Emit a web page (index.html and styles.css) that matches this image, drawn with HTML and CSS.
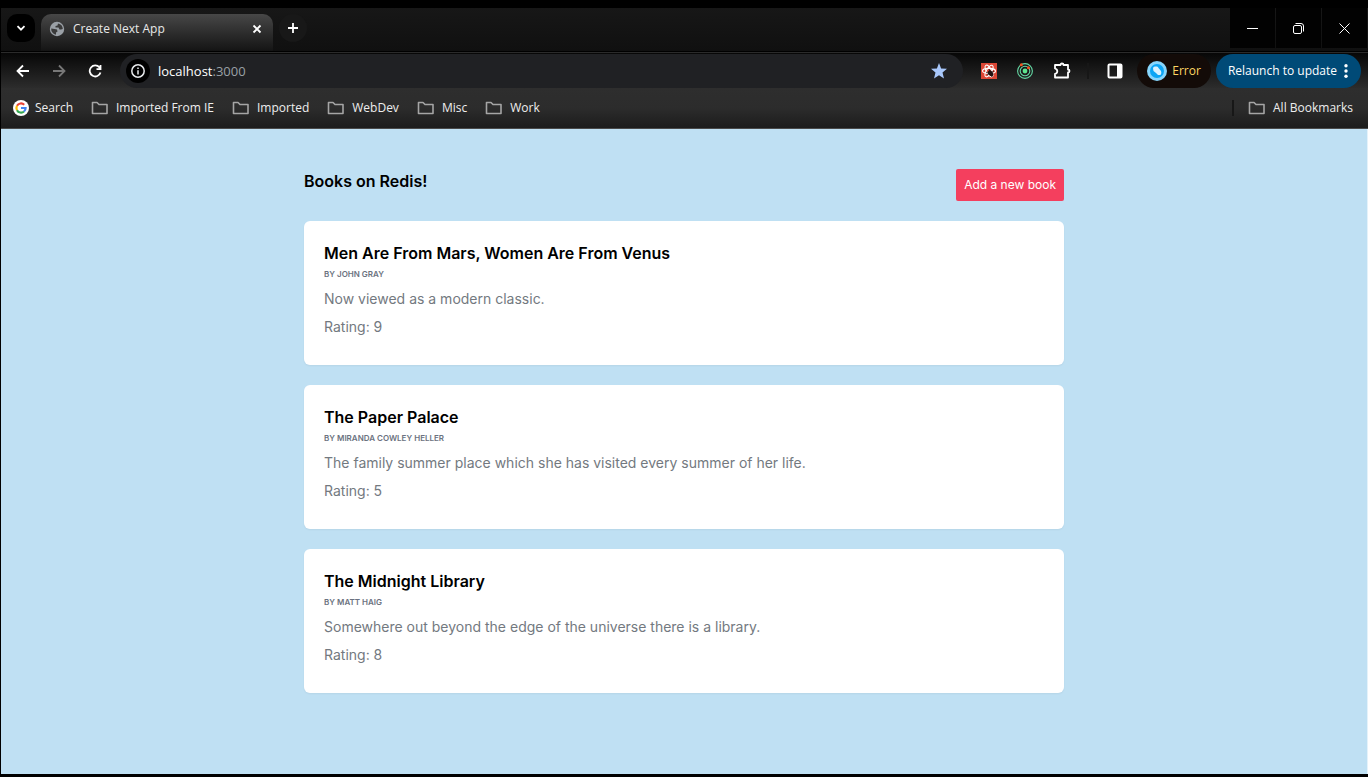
FILE: index.html
```html
<!DOCTYPE html>
<html lang="en">
<head>
<meta charset="utf-8">
<title>Create Next App</title>
<link rel="stylesheet" href="styles.css">
</head>
<body>
<div class="window">
  <header class="chrome">
    <div class="tabstrip">
      <button class="tab-search" aria-label="Search tabs"><svg width="10" height="10" viewBox="0 0 10 10"><path d="M1.500 3.200 5 6.700 8.500 3.200" class="stroke"/></svg></button>
      <div class="tab">
        <svg width="16" height="16" viewBox="0 0 16 16"><circle cx="8" cy="8" r="7.200" fill="#9aa0a6"/><path d="M9 2.500 8.500 4.500 6.500 5V6.500H9.500L10.500 8.500H12L13.800 8A5.900 5.900 0 0 0 9 2.500Z" fill="#3a3a3a"/><path d="M2.200 7.500 5.500 8 8 8.500 8.500 10.500 7 11.500V13.800A5.900 5.900 0 0 1 2.200 7.500Z" fill="#3a3a3a"/></svg>
        <span class="tab-title">Create Next App</span>
        <button class="icon-btn" aria-label="Close tab"><svg width="10" height="10" viewBox="0 0 10 10"><path d="M1.500 1.500 8.500 8.500M8.500 1.500 1.500 8.500" class="stroke"/></svg></button>
      </div>
      <button class="new-tab" aria-label="New tab"><svg width="12" height="12" viewBox="0 0 12 12"><path d="M6 1V11M1 6H11" class="stroke"/></svg></button>
      <div class="controls">
        <button aria-label="Minimize"><svg width="11" height="11" viewBox="0 0 11 11"><path d="M0 5.500H11" class="thin"/></svg></button>
        <button aria-label="Restore"><svg width="11" height="11" viewBox="0 0 11 11"><rect x=".5" y="2.500" width="8" height="8" rx="1.500" class="thin"/><path d="M2.500 .5H8Q10.500 .5 10.500 3V8.500" class="thin"/></svg></button>
        <button aria-label="Close"><svg width="11" height="11" viewBox="0 0 11 11"><path d="M.5.5 10.500 10.500M10.500.5.5 10.500" class="thin"/></svg></button>
      </div>
    </div>
    <div class="toolbar">
      <nav class="nav" aria-label="History">
        <button class="icon-btn" aria-label="Back"><svg width="14" height="14" viewBox="0 0 14 14"><path d="M13 7H2M7 1.500 1.500 7 7 12.500" class="stroke"/></svg></button>
        <button class="icon-btn dim" aria-label="Forward"><svg width="14" height="14" viewBox="0 0 14 14"><path d="M1 7H12M7 1.500 12.500 7 7 12.500" class="stroke"/></svg></button>
        <button class="icon-btn" aria-label="Reload"><svg width="14" height="14" viewBox="0 0 14 14"><path d="M12.500 8.500A5.500 5.500 0 1 1 11.500 3.500L12.500 5M12.500 1V5.200H8.500" class="stroke"/></svg></button>
      </nav>
      <div class="address">
        <button class="site-info" aria-label="Site information"><svg width="14" height="14" viewBox="0 0 14 14"><circle cx="7" cy="7" r="6.200" class="stroke"/><path d="M7 6.200V10.500M7 3.500V5" class="stroke"/></svg></button>
        <span class="url">localhost<span class="port">:3000</span></span>
        <button class="icon-btn" aria-label="Edit bookmark"><svg width="16" height="16" viewBox="0 0 16 16"><path d="M8 0 10.100 5.400 16 5.800 11.500 9.500 13 15.400 8 12.200 3 15.400 4.500 9.500 0 5.800 5.900 5.400Z" fill="#a8c7fa"/></svg></button>
      </div>
      <div class="extensions">
        <button class="icon-btn" aria-label="React tools"><svg width="16" height="16" viewBox="0 0 16 16"><path d="M0 0H16V16H0Z" fill="#dc4735"/><g fill="none" stroke="#fff" stroke-width="1.100"><ellipse cx="8" cy="8" rx="6.500" ry="2.600"/><ellipse cx="8" cy="8" rx="6.500" ry="2.600" transform="rotate(60 8 8)"/><ellipse cx="8" cy="8" rx="6.500" ry="2.600" transform="rotate(120 8 8)"/></g><ellipse cx="9.500" cy="10" rx="2.300" ry="3.200" fill="#211" transform="rotate(-35 10 10)"/><path d="M5 9 12 13M6 12 13 8M8 6 11 14" stroke="#211" stroke-width=".8"/></svg></button>
        <button class="icon-btn" aria-label="Developer tools"><svg width="16" height="16" viewBox="0 0 16 16"><g fill="none" stroke="#65d9a5" stroke-width="1.100"><circle cx="8" cy="8" r="7.400"/><circle cx="8" cy="8" r="4.800"/></g><circle cx="8" cy="8" r="2.400" fill="#5ee58f"/><circle cx="4.300" cy="1.800" r="1.500" fill="#f4511e"/><circle cx="11.500" cy="4.800" r="1.500" fill="#f4511e"/></svg></button>
        <button class="icon-btn" aria-label="Extensions"><svg width="18" height="18" viewBox="0 0 18 18"><path d="M2 3H7.500Q7.500 1.500 9 1.500T10.500 3H15V7.500Q16.500 7.500 16.500 9T15 10.500V15.500H2V12Q4.300 11.500 4.300 9.300T2 6.500Z" fill="none" stroke="#fff" stroke-width="1.800" stroke-linejoin="round"/></svg></button>
      </div>
      <span class="divider"></span>
      <button class="icon-btn" aria-label="Side panel"><svg width="16" height="16" viewBox="0 0 16 16"><rect x="1.500" y="1.500" width="13" height="13" rx="1" fill="none" stroke="#fff" stroke-width="2"/><path d="M10 1H15V15H10Z" fill="#fff"/></svg></button>
      <button class="profile"><svg width="20" height="20" viewBox="0 0 20 20"><circle cx="10" cy="10" r="10" fill="#87d5fc"/><circle cx="10" cy="10" r="7" fill="#0ba5f5"/><path d="M6 7.500Q6 5.500 8 5.500H10Q11 5.500 11.500 7L14 10Q15 12 13.500 14H11L9 12 6.500 10Z" fill="#d9f1fe"/></svg>Error</button>
      <button class="relaunch">Relaunch to update<svg width="4" height="16" viewBox="0 0 4 16"><g fill="#fff"><circle cx="2" cy="2.700" r="1.700"/><circle cx="2" cy="8" r="1.700"/><circle cx="2" cy="13.300" r="1.700"/></g></svg></button>
    </div>
    <nav class="bookmarks" aria-label="Bookmarks">
      <a href="#" class="search"><svg width="16" height="16" viewBox="0 0 16 16"><circle cx="8" cy="8" r="8" fill="#fff"/><g fill="none" stroke-width="2.200"><path d="M11.200 4.700A4.600 4.600 0 0 0 4 5.800" stroke="#ea4335"/><path d="M4 5.800A4.600 4.600 0 0 0 4 10.200" stroke="#fbbc05"/><path d="M4 10.200A4.600 4.600 0 0 0 11 11.500" stroke="#34a853"/><path d="M11 11.500A4.600 4.600 0 0 0 12.600 8H8" stroke="#4285f4"/></g></svg>Search</a>
      <a href="#"><svg class="folder" width="18" height="14" viewBox="0 0 18 14"><path d="M1.500 1.500H6L8 3.500H16V12.500H1.500Z"/></svg>Imported From IE</a>
      <a href="#"><svg class="folder" width="18" height="14" viewBox="0 0 18 14"><path d="M1.500 1.500H6L8 3.500H16V12.500H1.500Z"/></svg>Imported</a>
      <a href="#"><svg class="folder" width="18" height="14" viewBox="0 0 18 14"><path d="M1.500 1.500H6L8 3.500H16V12.500H1.500Z"/></svg>WebDev</a>
      <a href="#"><svg class="folder" width="18" height="14" viewBox="0 0 18 14"><path d="M1.500 1.500H6L8 3.500H16V12.500H1.500Z"/></svg>Misc</a>
      <a href="#"><svg class="folder" width="18" height="14" viewBox="0 0 18 14"><path d="M1.500 1.500H6L8 3.500H16V12.500H1.500Z"/></svg>Work</a>
      <span class="divider push"></span>
      <a href="#"><svg class="folder" width="18" height="14" viewBox="0 0 18 14"><path d="M1.500 1.500H6L8 3.500H16V12.500H1.500Z"/></svg>All Bookmarks</a>
    </nav>
  </header>
  <main class="page">
    <div class="content">
      <div class="heading">
        <h1>Books on Redis!</h1>
        <button class="add">Add a new book</button>
      </div>
      <article class="card">
        <h2>Men Are From Mars, Women Are From Venus</h2>
        <p class="author">By John Gray</p>
        <p class="text">Now viewed as a modern classic.</p>
        <p class="text">Rating: 9</p>
      </article>
      <article class="card">
        <h2>The Paper Palace</h2>
        <p class="author">By Miranda Cowley Heller</p>
        <p class="text">The family summer place which she has visited every summer of her life.</p>
        <p class="text">Rating: 5</p>
      </article>
      <article class="card">
        <h2>The Midnight Library</h2>
        <p class="author">By Matt Haig</p>
        <p class="text">Somewhere out beyond the edge of the universe there is a library.</p>
        <p class="text">Rating: 8</p>
      </article>
    </div>
  </main>
</div>
</body>
</html>
```

FILE: styles.css
```css
* { box-sizing: border-box; }
body { margin: 0; background: #000; font-family: "Inter", sans-serif; }
button { font: inherit; color: inherit; border: 0; padding: 0; background: none; cursor: pointer; }
h1, h2, p { margin: 0; }
svg { display: block; flex: none; }
.stroke { fill: none; stroke: currentColor; stroke-width: 1.8; }
.thin { fill: none; stroke: currentColor; stroke-width: 1; }

.window {
  min-height: 100vh;
  display: flex;
  flex-direction: column;
  border: solid #000;
  border-width: 8px 0 3px 1px;
}

.chrome { color: #fff; font: 12px/16px "Open Sans", sans-serif; border-bottom: 1px solid #4a4a4a; }
.tabstrip {
  height: 44px;
  display: flex;
  align-items: flex-start;
  padding: 0 1px 0 6px;
  background: linear-gradient(#171717, #101010);
  border-bottom: 1px solid #000;
}
.tab-search, .new-tab {
  width: 28px;
  height: 28px;
  margin-top: 6px;
  border-radius: 10px;
  background: #000;
  display: grid;
  place-items: center;
}
.new-tab { border-radius: 50%; background: #181818; margin-left: 6px; }
.tab {
  width: 232px;
  height: 37px;
  margin: 6px 0 0 6px;
  padding: 0 11px 8px 8px;
  border-radius: 10px 10px 0 0;
  background: linear-gradient(#474747, #141414);
  display: flex;
  align-items: center;
  gap: 8px;
}
.tab-title { flex: 1; color: #e8e8e8; }
.icon-btn { display: grid; place-items: center; }
.controls { margin-left: auto; display: flex; gap: 1px; }
.controls button { width: 45px; height: 40px; background: #020202; display: grid; place-items: center; }

.toolbar {
  height: 36px;
  padding: 1px 7px 0 15px;
  display: flex;
  align-items: center;
  border-top: 1px solid #2b2b2b;
  background: linear-gradient(#070707, #2c2c2c);
}
.nav { display: flex; gap: 22px; margin-right: 18px; }
.dim { color: #777; }
.address {
  flex: 1;
  height: 34px;
  border-radius: 17px;
  background: #202124;
  display: flex;
  align-items: center;
  padding: 0 16px 0 6px;
  font-size: 13px;
}
.site-info { width: 24px; height: 24px; border-radius: 50%; background: #000; display: grid; place-items: center; color: #e8eaed; margin-right: 8px; }
.site-info .stroke { stroke-width: 1.5; }
.url { flex: 1; }
.port { color: #9aa0a6; }
.extensions { display: flex; align-items: center; gap: 20px; margin-left: 18px; }
.divider { width: 2px; height: 16px; background: #171717; margin: 0 18px 0 16px; }
.profile, .relaunch { height: 34px; border-radius: 17px; display: flex; align-items: center; white-space: nowrap; }
.profile { background: #130b08; color: #fdd663; padding: 0 10px; gap: 5px; margin: 0 5px 0 14px; }
.relaunch { background: #004a77; padding: 0 13px 0 12px; gap: 7px; }

.bookmarks {
  height: 40px;
  display: flex;
  align-items: center;
  padding: 0 15px 0 12px;
  gap: 18px;
  background: linear-gradient(#2e2e2e, #2c2c2c 50%, #1c1c1c);
}
.bookmarks a { color: #eee; text-decoration: none; display: flex; align-items: center; gap: 7px; }
.bookmarks .search { gap: 6px; }
.folder path { fill: none; stroke: #a5a5a5; stroke-width: 1.6; stroke-linejoin: round; }
.push { margin: 0 -4px 0 auto; }

.page { flex: 1; background: #bfe0f3; padding: 40px 20px; border-right: 1px solid #e4f2fa; }
.content { max-width: 760px; margin: 0 auto; display: flex; flex-direction: column; gap: 20px; }
.heading { display: flex; justify-content: space-between; align-items: flex-start; }
.heading h1, .card h2 { font-size: 16px; line-height: 24px; font-weight: 600; color: #000; }
.add { padding: 8px; border-radius: 2px; background: #f43f5e; color: #fff; font-size: 12px; line-height: 16px; }
.card { background: #fff; border-radius: 6px; padding: 20px; box-shadow: 0 1px 2px rgba(0, 0, 0, .05); }
.author { font-size: 8px; line-height: 18px; font-weight: 600; text-transform: uppercase; color: #6b7280; margin-bottom: 6px; }
.text { font-size: 14px; line-height: 20px; color: #737980; margin-bottom: 8px; }
```
